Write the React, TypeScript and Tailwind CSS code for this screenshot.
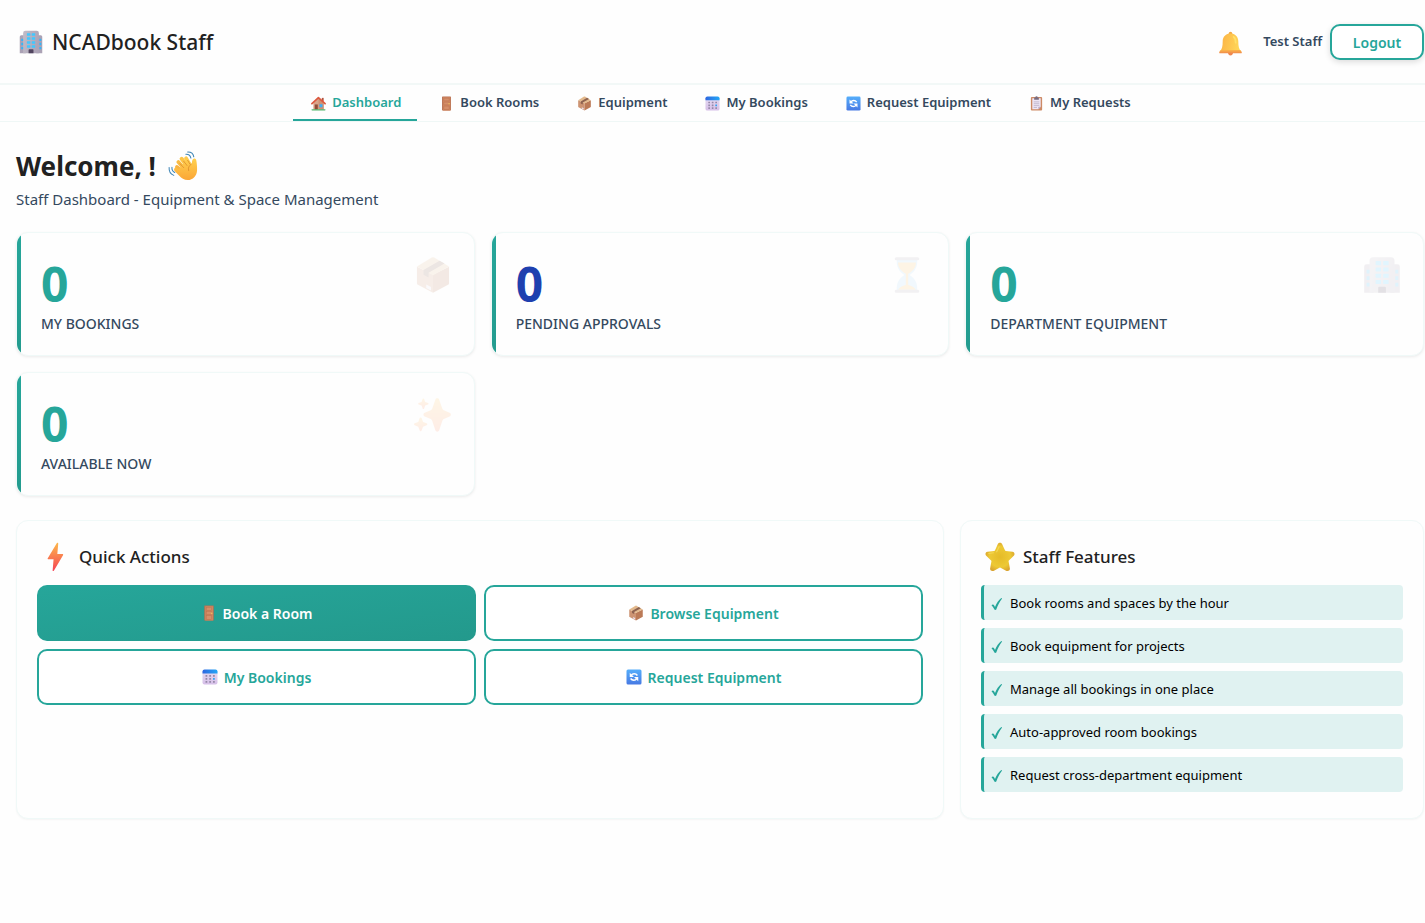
import { useId } from "react";
import type { ReactNode } from "react";

type IconProps = { className?: string };

function Svg({ className, children }: { className?: string; children: ReactNode }) {
  return (
    <svg viewBox="0 0 32 32" className={className} aria-hidden="true" fill="none">
      {children}
    </svg>
  );
}

function Gradient({ id, from, to, x2 = 0, y2 = 1 }: { id: string; from: string; to: string; x2?: number; y2?: number }) {
  return (
    <linearGradient id={id} x1="0" y1="0" x2={x2} y2={y2}>
      <stop stopColor={from} />
      <stop offset="1" stopColor={to} />
    </linearGradient>
  );
}

function Building({ className }: IconProps) {
  const id = useId();
  return (
    <Svg className={className}>
      <defs>
        <Gradient id={id} from="#c2bdc8" to="#aea5b8" x2={1} y2={0.3} />
      </defs>
      <path d="M1 31V9a2 2 0 0 1 2-2h6v24zM31 31V9a2 2 0 0 0-2-2h-6v24z" fill="#aba2b5" />
      <path d="M5.500 31V4a3 3 0 0 1 3-3h15a3 3 0 0 1 3 3v27z" fill={`url(#${id})`} />
      {[4.3, 9.6, 14.9, 20.2].map((y) => (
        <g key={y} fill="#41c8ff">
          <rect x="10.600" y={y} width="4.600" height="3.400" rx=".5" />
          <rect x="17" y={y} width="4.600" height="3.400" rx=".5" />
        </g>
      ))}
      {[11.5, 17, 22.5].map((y) => (
        <path key={y} d={`M3 ${y}h2.500v3.200H3zM27.200 ${y}h2.500v3.200h-2.500z`} fill="#35b6f7" />
      ))}
      <path d="M12.800 31v-4.200a1 1 0 0 1 1-1h4.500a1 1 0 0 1 1 1V31z" fill="#51455f" />
    </Svg>
  );
}

function Bell({ className }: IconProps) {
  const id = useId();
  return (
    <Svg className={className}>
      <defs>
        <Gradient id={id} from="#fbb145" to="#ffd557" x2={1} y2={0.2} />
        <Gradient id={`${id}b`} from="#fbb84a" to="#f08a4b" />
      </defs>
      <circle cx="16" cy="28.600" r="2.900" fill="#ef8650" />
      <circle cx="16" cy="3" r="2.200" fill="#f3a945" />
      <path d="M6 13.300C6 7.500 10.300 3.300 16 3.300s10 4.200 10 10c0 6.200.9 9.200 3 12.200H3c2.100-3 3-6 3-12.200Z" fill={`url(#${id})`} />
      <path d="M3.800 24.200h24.400c1.400.8 2.300 2.200 2.300 3.300 0 .8-.6 1-1.500 1H3c-.9 0-1.500-.2-1.500-1 0-1.100.9-2.500 2.300-3.300Z" fill={`url(#${id}b)`} />
      <path d="M20 7.500c2 1.500 2.600 4 2.600 7.500" stroke="#ffe06a" strokeWidth="2.200" strokeLinecap="round" />
    </Svg>
  );
}

function House({ className }: IconProps) {
  return (
    <Svg className={className}>
      <path d="M23 4h4v8h-4z" fill="#b4543f" />
      <path d="M5 14 16 4l11 10v15H5z" fill="#d9a58a" />
      <path d="M16 4 27 14v15H16z" fill="#cf9275" />
      <path d="M2 16.500 15.800 3.600 30 16.500" stroke="#dc5a40" strokeWidth="3.600" strokeLinecap="round" strokeLinejoin="round" />
      <rect x="8" y="18" width="6.500" height="11" fill="#8f4c38" />
      <rect x="18" y="17.500" width="6.500" height="6.500" rx=".8" fill="#3fb0f3" />
      <rect x="1" y="28" width="30" height="3" rx="1.500" fill="#51b56b" />
    </Svg>
  );
}

function Door({ className }: IconProps) {
  return (
    <Svg className={className}>
      <rect x="6.500" y="1" width="19" height="30" rx="1" fill="#b87152" />
      <rect x="8.500" y="2.500" width="15.500" height="28.500" fill="#d0865f" />
      <g fill="#d58e69" stroke="#b9714f" strokeWidth=".9">
        <rect x="10.500" y="4.500" width="11" height="6" />
        <rect x="10.500" y="13" width="11" height="6" />
        <rect x="10.500" y="21.500" width="11" height="7" />
      </g>
      <circle cx="21.500" cy="16.500" r="1.500" fill="#f5c65d" />
    </Svg>
  );
}

function Package({ className }: IconProps) {
  return (
    <Svg className={className}>
      <path d="M2.500 9 16 15.500V31L3.300 24.200a1.500 1.500 0 0 1-.8-1.300z" fill="#cd9473" />
      <path d="M29.500 9 16 15.500V31l12.700-6.800a1.500 1.500 0 0 0 .8-1.300z" fill="#bb7a57" />
      <path d="M15 1.300a2 2 0 0 1 2 0L29.500 8.800 16 16.200 2.500 8.800z" fill="#e3ba8e" />
      <path d="m8 11.800 13.500-7.900 4.200 2.500L12.300 14v4.200L8 15.800z" fill="#8d6250" />
      <path d="m10.300 24 4 2v3l-4-2z" fill="#e8dff0" />
    </Svg>
  );
}

function CalendarIcon({ className }: IconProps) {
  const id = useId();
  return (
    <Svg className={className}>
      <defs>
        <Gradient id={id} from="#e5dcf2" to="#d6bfe8" />
        <Gradient id={`${id}b`} from="#2f67e0" to="#22a7f6" x2={1} y2={0} />
      </defs>
      <rect x="1" y="2" width="30" height="29" rx="4" fill={`url(#${id})`} />
      <path d="M1 9V5a4 4 0 0 1 4-4h22a4 4 0 0 1 4 4v4z" fill={`url(#${id}b)`} />
      {[12, 18, 24].map((y) =>
        [7, 14.5, 22].map((x) => (
          <rect key={`${x}-${y}`} x={x} y={y} width="3.600" height="3.600" rx=".7" fill={x === 22 && y === 18 ? "#2da3f5" : "#9588a8"} />
        ))
      )}
    </Svg>
  );
}

function Refresh({ className }: IconProps) {
  const id = useId();
  return (
    <Svg className={className}>
      <defs>
        <Gradient id={id} from="#55aefb" to="#4779e3" />
      </defs>
      <rect x="1" y="1" width="30" height="30" rx="3" fill={`url(#${id})`} />
      <path d="M10.500 12.800c2.600-4.300 9-4.600 12.300.2M21.500 19.200c-2.600 4.300-9 4.600-12.300-.2" stroke="#fff" strokeWidth="3" />
      <path d="M7.500 7.500v8.500h8.500zM24.500 24.500V16H16z" fill="#fff" />
    </Svg>
  );
}

function Clipboard({ className }: IconProps) {
  return (
    <Svg className={className}>
      <rect x="4" y="2" width="24" height="29" rx="2" fill="#cd8a65" />
      <path d="M7 5h18v18l-5 5H7z" fill="#eee5f5" />
      <path d="M25 23h-4a1 1 0 0 0-1 1v4z" fill="#bba9c9" />
      <path d="M12 3h1.500a2.500 2.500 0 0 1 5 0H20a1 1 0 0 1 1 1v4H11V4a1 1 0 0 1 1-1Z" fill="#786c80" />
      <path d="M10 12.500h12M10 16.500h12M10 20.500h12M10 24.500h7" stroke="#b4a8c0" strokeWidth="1.500" />
    </Svg>
  );
}

function Wave({ className }: IconProps) {
  const id = useId();
  return (
    <Svg className={className}>
      <defs>
        <Gradient id={id} from="#ffd04e" to="#fba636" />
      </defs>
      <g strokeLinecap="round">
        <path d="M11 11.800 18 19.500" stroke="#f9bb45" strokeWidth="4" />
        <path d="M14.500 8.300 21 17" stroke="#fcc548" strokeWidth="4.200" />
        <path d="M19.200 7.800 23.500 15" stroke="#fecb4b" strokeWidth="4" />
        <path d="M9.500 17 16 22.500" stroke="#fab440" strokeWidth="4" />
      </g>
      <path d="M11.500 19.500 20 9.500l5 4.500c.8-1.500.3-3.700 1.500-5.200 1.200-1.300 3.300-.6 3.700 1.200.6 3.200.9 6.500.8 10.500-.2 6-4.500 10.500-10 10.500-4 0-6.500-1.800-9-4.500l-4.800-5c-2-2.200.6-5 2.800-3.200z" fill={`url(#${id})`} />
      <path d="m12.800 13.500 4 4.300M16.600 10.800l3.700 4.700M21 10l2.400 4M24.800 14c-2.600 1.700-3.600 4-2.800 7" stroke="#d98a2b" strokeWidth=".8" strokeLinecap="round" />
      <path d="M19 3.500c2.600-.2 4.800 1.400 5.400 4M21 1c3.500-.1 6 2 6.500 5.200M1.200 17.500c-.3 4 1.700 7.300 5 8.500M4.200 17.300c-.2 2.700.9 4.700 3 5.700" stroke="#3c84b5" strokeWidth="1.100" strokeLinecap="round" />
    </Svg>
  );
}

function Bolt({ className }: IconProps) {
  const id = useId();
  return (
    <Svg className={className}>
      <defs>
        <Gradient id={id} from="#fdb94b" to="#f54255" />
      </defs>
      <path d="M16.800 1.200 7.200 17.200c-.4.700 0 1.300.8 1.300h5.400l-1 11.800c-.1.900.8 1 1.300.3l9.800-16.500c.4-.7 0-1.300-.8-1.300h-5.300l1-11.200c0-1-1.100-1.200-1.600-.4Z" fill={`url(#${id})`} />
    </Svg>
  );
}

function StarIcon({ className }: IconProps) {
  const id = useId();
  return (
    <Svg className={className}>
      <defs>
        <radialGradient id={id} cx=".5" cy=".5" r=".55">
          <stop stopColor="#e5bb27" />
          <stop offset=".65" stopColor="#edc935" />
          <stop offset="1" stopColor="#d8a02e" />
        </radialGradient>
      </defs>
      <path d="M13.700 2.100c.9-1.900 3.600-1.900 4.500 0l3.100 6.700c.2.400.5.600.9.700l7.200.9c2 .3 2.800 2.700 1.300 4.200l-5.200 5.100c-.3.300-.4.700-.3 1.100l1.300 7.300c.4 2.100-1.700 3.600-3.600 2.700l-6.300-3.400a1.300 1.300 0 0 0-1.200 0l-6.300 3.400c-1.900.9-4-.6-3.600-2.700l1.300-7.300c.1-.4 0-.8-.3-1.100l-5.200-5.100c-1.500-1.500-.7-3.900 1.300-4.200l7.200-.9c.4-.1.700-.3.900-.7z" fill={`url(#${id})`} />
      <path d="m15 5-2.500 5.500M4 12.300l5-.8" stroke="#f5d755" strokeWidth="1.200" strokeLinecap="round" />
    </Svg>
  );
}

function Hourglass({ className }: IconProps) {
  return (
    <Svg className={className}>
      <path d="M7.500 3h17c.6 5.500-1.500 10-6.300 13 4.800 3 6.900 7.500 6.300 13h-17c-.6-5.500 1.500-10 6.300-13-4.800-3-6.900-7.500-6.300-13Z" fill="#a9dcfb" />
      <path d="M8.500 5.500h15c.2 5-3.500 7.600-6.500 9.500v9.500c3 .8 5.500 2 6.500 4h-15c1-2 3.500-3.200 6.500-4V15c-3-1.900-6.700-4.500-6.500-9.500Z" fill="#fdbe5c" />
      <path d="M7 1h18a1.300 1.300 0 0 1 0 2.600H7A1.300 1.300 0 0 1 7 1ZM7 28.400h18a1.300 1.300 0 0 1 0 2.600H7a1.300 1.300 0 0 1 0-2.600Z" fill="#b0aab8" />
    </Svg>
  );
}

function Sparkles({ className }: IconProps) {
  const id = useId();
  return (
    <Svg className={className}>
      <defs>
        <Gradient id={id} from="#ffcb60" to="#ff8d68" />
      </defs>
      <g fill={`url(#${id})`}>
        <path d="M18 3.200c.6-1.600 2.600-1.600 3.200 0l2.600 7.300c.3.900 1 1.500 1.800 1.800l4.300 1.900c1.500.6 1.500 2.500 0 3.100l-4.300 1.900c-.8.300-1.500.9-1.800 1.800l-2.600 7.800c-.6 1.600-2.600 1.600-3.200 0L15.400 21c-.3-.9-1-1.500-1.800-1.800l-4.500-1.900c-1.500-.6-1.500-2.500 0-3.100l4.500-1.900c.8-.3 1.500-.9 1.800-1.800z" />
        <path d="M7.300 2.600c.2-.6 1-.6 1.200 0L9.400 5l2.400.9c.6.200.6 1 0 1.200L9.400 8l-.9 2.600c-.2.600-1 .6-1.200 0L6.400 8 4 7.100c-.6-.2-.6-1 0-1.200L6.400 5z" />
        <path d="M4.800 18.600c.3-.8 1.300-.8 1.600 0l1.200 3.200 3 1.200c.8.300.8 1.300 0 1.600l-3 1.200-1.200 3.300c-.3.800-1.300.8-1.600 0l-1.200-3.300-3-1.200c-.8-.3-.8-1.300 0-1.600l3-1.200z" />
      </g>
    </Svg>
  );
}

function Check({ className }: IconProps) {
  return (
    <svg viewBox="0 0 12 14" className={className} aria-hidden="true" fill="#26a69a">
      <path d="M.5 8.300c1-1.100 2.100-.9 2.700.3l.8 1.500C5.500 6.100 7.700 2.900 10.300 1l.8.400C8.600 4.600 6.700 8.200 5.300 12.400c-.5.600-1.500.7-1.900 0C2.500 10.800 1.800 9.600.5 8.300Z" />
    </svg>
  );
}

const tabs = [
  { label: "Dashboard", Icon: House, active: true },
  { label: "Book Rooms", Icon: Door },
  { label: "Equipment", Icon: Package },
  { label: "My Bookings", Icon: CalendarIcon },
  { label: "Request Equipment", Icon: Refresh },
  { label: "My Requests", Icon: Clipboard },
];

const stats = [
  { label: "My Bookings", Icon: Package, color: "text-[#26a69a]" },
  { label: "Pending Approvals", Icon: Hourglass, color: "text-[#1e40af]" },
  { label: "Department Equipment", Icon: Building, color: "text-[#26a69a]" },
  { label: "Available Now", Icon: Sparkles, color: "text-[#26a69a]" },
];

const actions = [
  { label: "Book a Room", Icon: Door, primary: true },
  { label: "Browse Equipment", Icon: Package },
  { label: "My Bookings", Icon: CalendarIcon },
  { label: "Request Equipment", Icon: Refresh },
];

const features = [
  "Book rooms and spaces by the hour",
  "Book equipment for projects",
  "Manage all bookings in one place",
  "Auto-approved room bookings",
  "Request cross-department equipment",
];

export default function App() {
  return (
    <div className="min-h-screen bg-[#fefefe] font-['Noto_Sans','Open_Sans',sans-serif] text-[#212121]">
      <header className="flex h-[85px] items-center justify-between border-b-2 border-[#f2f8f7] pl-[19px] pr-px pt-px">
        <h1 className="flex items-center gap-[9px] text-[21px] font-medium leading-7">
          <Building className="size-6" />
          NCADbook Staff
        </h1>
        <div className="flex items-center">
          <button type="button" aria-label="Notifications" className="mr-5 pt-[2px]">
            <Bell className="size-[25px]" />
          </button>
          <span className="mr-2 text-[13px] font-semibold text-[#34495e]">Test Staff</span>
          <button type="button" className="h-9 w-[94px] rounded-[10px] border-2 border-[#26a69a] bg-white text-[14px] font-semibold text-[#26a69a] shadow-[0_2px_6px_rgba(0,0,0,0.14)]">
            Logout
          </button>
        </div>
      </header>

      <nav className="flex justify-center gap-1 border-b border-[#eff7f6] pl-[15px]">
        {tabs.map(({ label, Icon, active }) => (
          <a
            key={label}
            href="#"
            className={
              active
                ? "flex h-9 items-center gap-[6px] border-b-2 border-[#26a69a] pl-[18px] pr-4 pt-[2px] text-[13px] font-semibold text-[#26a69a]"
                : "flex h-9 items-center gap-[6px] border-b-2 border-transparent pl-[18px] pr-4 pt-[2px] text-[13px] font-semibold text-[#34495e]"
            }
          >
            <Icon className="size-[15px]" />
            {label}
          </a>
        ))}
      </nav>

      <main className="pb-8 pl-4 pr-px pt-6">
        <h2 className="flex h-10 items-center gap-3 text-[26px] font-bold leading-10">
          Welcome, !
          <Wave className="size-[30px]" />
        </h2>
        <p className="text-[15px] leading-[26px] text-[#34495e]">Staff Dashboard - Equipment &amp; Space Management</p>

        <section className="mt-5 grid grid-cols-3 gap-4">
          {stats.map(({ label, Icon, color }) => (
            <article key={label} className="relative flex h-[124px] justify-between overflow-hidden rounded-xl border border-[#f0f9f8] bg-[#fefefe] pl-6 pr-[22px] pt-[23px] shadow-[0_1px_3px_rgba(0,0,0,0.08)]">
              <span className="absolute inset-y-0 left-0 w-1 bg-gradient-to-b from-[#26a69a] to-[#239b8e]" />
              <div>
                <div className={`text-[48px] font-bold leading-[56px] ${color}`}>0</div>
                <div className="text-[14px] font-medium uppercase leading-6 text-[#34495e]">{label}</div>
              </div>
              <Icon className="size-[38px] opacity-15" />
            </article>
          ))}
        </section>

        <div className="mt-6 grid grid-cols-[2fr_1fr] gap-4">
          <section className="rounded-xl border border-[#f0f9f8] bg-[#fefefe] px-5 pb-[18px] pt-5 shadow-[0_1px_2px_rgba(0,0,0,0.04)]">
            <h3 className="flex h-8 items-center gap-2 pl-1 text-[17px] font-medium">
              <Bolt className="size-[30px]" />
              Quick Actions
            </h3>
            <div className="mt-3 grid grid-cols-2 gap-2">
              {actions.map(({ label, Icon, primary }) => (
                <button
                  key={label}
                  type="button"
                  className={
                    primary
                      ? "flex h-14 items-center justify-center gap-[6px] rounded-[10px] bg-gradient-to-br from-[#26a69a] to-[#23998c] text-[14px] font-semibold text-white"
                      : "flex h-14 items-center justify-center gap-[6px] rounded-[10px] border-2 border-[#26a69a] bg-white text-[14px] font-semibold text-[#26a69a]"
                  }
                >
                  <Icon className="size-4" />
                  {label}
                </button>
              ))}
            </div>
          </section>

          <section className="rounded-xl border border-[#f0f9f8] bg-[#fefefe] px-5 pb-[18px] pt-5 shadow-[0_1px_2px_rgba(0,0,0,0.04)]">
            <h3 className="flex h-8 items-center gap-2 pl-1 text-[17px] font-medium">
              <StarIcon className="size-[30px]" />
              Staff Features
            </h3>
            <ul className="mt-3">
              {features.map((feature) => (
                <li key={feature} className="mb-2 flex h-[35px] items-center gap-[7px] rounded border-l-[3px] border-[#26a69a] bg-[#e0f2f1] pl-[7px] pt-[2px] text-[13px] text-black">
                  <Check className="h-[14px] w-3" />
                  {feature}
                </li>
              ))}
            </ul>
          </section>
        </div>
      </main>
    </div>
  );
}
